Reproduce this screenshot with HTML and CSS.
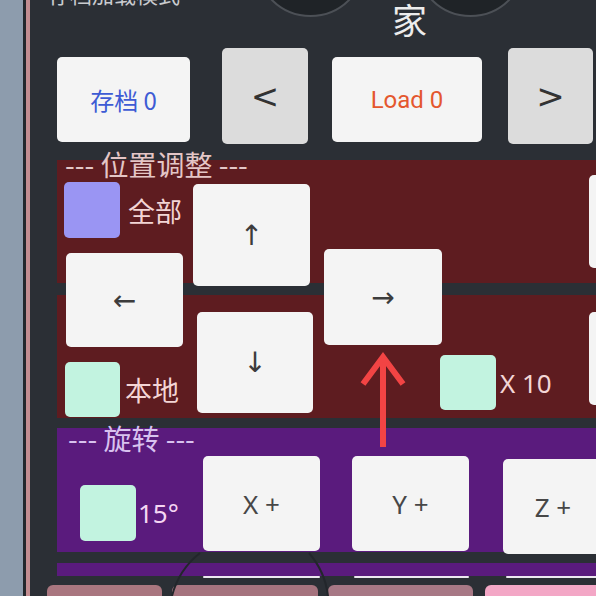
FILE: index.html
```html
<!DOCTYPE html>
<html lang="zh-CN">
<head>
    <meta charset="UTF-8">
    <title>存档加载</title>
    <link rel="stylesheet" href="styles.css">
</head>
<body>
    <div class="screen">
        <div class="rail"></div>

        <div class="main">
            <div class="top">
                <div class="mode-label">存档加载模式</div>
                <div class="knob knob-a"></div>
                <div class="knob knob-b"></div>
                <div class="home">家</div>
            </div>

            <div class="slot-row">
                <div class="btn btn-save">存档 0</div>
                <div class="btn btn-grey btn-prev">&lt;</div>
                <div class="btn btn-load">Load 0</div>
                <div class="btn btn-grey btn-next">&gt;</div>
            </div>

            <div class="panel panel-move">
                <div class="panel-title">--- 位置调整 ---</div>
                <div class="pad">
                    <div class="col col-a">
                        <div class="toggle toggle-all">
                            <span class="box box-violet"></span>
                            <span class="toggle-text">全部</span>
                        </div>
                        <div class="btn key key-left">←</div>
                        <div class="toggle toggle-local">
                            <span class="box box-mint"></span>
                            <span class="toggle-text">本地</span>
                        </div>
                    </div>
                    <div class="col col-b">
                        <div class="btn key key-up">↑</div>
                        <div class="btn key key-down">↓</div>
                    </div>
                    <div class="col col-c">
                        <div class="btn key key-right">→</div>
                    </div>
                    <div class="col col-d">
                        <div class="toggle toggle-x10">
                            <span class="box box-mint"></span>
                            <span class="toggle-text latin">X 10</span>
                        </div>
                    </div>
                    <div class="col col-e">
                        <div class="btn key edge-1"></div>
                        <div class="btn key edge-2"></div>
                    </div>
                </div>
            </div>

            <div class="panel panel-rotate">
                <div class="panel-title">--- 旋转 ---</div>
                <div class="rot-row">
                    <div class="toggle toggle-step">
                        <span class="box box-mint"></span>
                        <span class="toggle-text latin">15°</span>
                    </div>
                    <div class="btn axis axis-x">X +</div>
                    <div class="btn axis axis-y">Y +</div>
                    <div class="btn axis axis-z">Z +</div>
                </div>
            </div>

            <div class="strip"></div>
            <div class="strip-edges">
                <span class="edge e1"></span>
                <span class="edge e2"></span>
                <span class="edge e3"></span>
            </div>

            <div class="tabs">
                <div class="tab t1"></div>
                <div class="tab t2"></div>
                <div class="tab t3"></div>
                <div class="tab t4"></div>
            </div>
        </div>

        <!-- hint arrow and joystick ring drawn over the ui -->
        <svg class="hint" width="596" height="596" viewBox="0 0 596 596">
            <path d="M200 553 A80 80 0 0 0 172 596" fill="none" stroke="#22262b" stroke-width="2"/>
            <path d="M309 553 A80 80 0 0 1 328 596" fill="none" stroke="#22262b" stroke-width="2"/>
            <line x1="383" y1="360" x2="383" y2="447" stroke="#f24444" stroke-width="6"/>
            <polyline points="363,384 383,357 403,384" fill="none" stroke="#f24444" stroke-width="6"/>
        </svg>
    </div>
</body>
</html>
```

FILE: styles.css
```css
html, body {
    margin: 0;
    padding: 0;
}

body {
    width: 596px;
    height: 596px;
    overflow: hidden;
    background: #2b2f35;
    font-family: Roboto, "Noto Sans CJK SC", sans-serif;
}

.screen {
    position: relative;
    display: flex;
    width: 596px;
    height: 596px;
    overflow: hidden;
}

.rail {
    flex: 0 0 30px;
    background: linear-gradient(to right, #8d9cad 0 23px, #23272c 23px 26px, #c38d91 26px 30px);
}

.main {
    flex: 1;
    display: flex;
    flex-direction: column;
    position: relative;
}

/* top bar */
.top {
    position: relative;
    height: 48px;
    flex-shrink: 0;
}

.mode-label {
    position: absolute;
    left: 18px;
    top: -20px;
    font-family: "Noto Sans CJK SC", sans-serif;
    font-size: 22px;
    line-height: 26px;
    color: #c9cbcf;
}

.knob {
    position: absolute;
    top: -94px;
    width: 107px;
    height: 107px;
    border-radius: 50%;
    background: #1f2327;
    border: 2px solid #4c5056;
}

.knob-a { left: 225px; }
.knob-b { left: 385px; }

.home {
    position: absolute;
    left: 362px;
    top: 0;
    z-index: 1;
    font-family: "Noto Sans CJK SC", sans-serif;
    font-size: 35px;
    line-height: 38px;
    color: #ececec;
}

/* buttons */
.btn {
    display: flex;
    align-items: center;
    justify-content: center;
    flex-shrink: 0;
    background: #f4f4f4;
    border-radius: 5px;
    box-sizing: border-box;
    color: #444;
}

.btn-grey {
    background: #dcdcdc;
    height: 96px;
    font-family: "DejaVu Sans", sans-serif;
    font-size: 34px;
    color: #333;
}

.slot-row {
    display: flex;
    align-items: flex-start;
    padding-left: 27px;
    height: 96px;
    flex-shrink: 0;
}

.btn-save {
    width: 133px;
    height: 85px;
    margin-top: 9px;
    font-family: "Noto Sans CJK SC", sans-serif;
    font-size: 24px;
    color: #3d5bd4;
}

.btn-prev {
    width: 86px;
    margin-left: 32px;
}

.btn-load {
    width: 150px;
    height: 85px;
    margin-top: 9px;
    margin-left: 24px;
    font-size: 24px;
    color: #e4572e;
}

.btn-next {
    width: 85px;
    margin-left: 26px;
}

/* panels */
.panel {
    display: flex;
    flex-direction: column;
    flex-shrink: 0;
    margin-left: 27px;
}

.panel-title {
    height: 28px;
    font-family: "Noto Sans CJK SC", sans-serif;
    font-size: 28px;
    line-height: 28px;
    white-space: nowrap;
}

.panel-move {
    margin-top: 16px;
    height: 258px;
    background: linear-gradient(to bottom, #5e1c20 0 123px, #2b2f35 123px 135px, #5e1c20 135px 258px);
}

.panel-move .panel-title {
    margin-top: -10px;
    padding-left: 8px;
    color: #e4c6c6;
}

.pad {
    display: flex;
    align-items: flex-start;
}

.col {
    display: flex;
    flex-direction: column;
    align-items: flex-start;
    flex-shrink: 0;
}

.col-a { width: 119px; margin-left: 7px; }
.col-b { width: 120px; margin-left: 10px; }
.col-c { width: 118px; margin-left: 11px; }
.col-d { width: 149px; margin-left: -2px; }
.col-e { width: 60px; }

.key {
    font-family: "DejaVu Sans", sans-serif;
    font-size: 28px;
    color: #3c3c3c;
}

.key-left { width: 117px; height: 94px; margin: 15px 0 0 2px; }
.key-up { width: 117px; height: 102px; margin-top: 6px; }
.key-down { width: 116px; height: 101px; margin: 26px 0 0 4px; }
.key-right { width: 118px; height: 96px; margin-top: 71px; }
.edge-1 { width: 60px; height: 93px; margin-top: -3px; }
.edge-2 { width: 60px; height: 93px; margin-top: 44px; }

.toggle {
    display: flex;
    align-items: center;
}

.box {
    display: block;
    width: 56px;
    height: 56px;
    border-radius: 5px;
    flex-shrink: 0;
}

.box-violet { background: #9a95f3; }
.box-mint { background: #c2f3e0; }

.toggle-text {
    font-family: "Noto Sans CJK SC", sans-serif;
    font-size: 27px;
    color: #f3d5d5;
    white-space: nowrap;
}

.toggle-text.latin {
    font-family: "Noto Sans", sans-serif;
    font-size: 26px;
}

.toggle-all { margin-top: 4px; }
.toggle-all .toggle-text { margin-left: 8px; }

.toggle-local { margin: 15px 0 0 1px; }
.toggle-local .box { width: 55px; height: 55px; }
.toggle-local .toggle-text { margin-left: 5px; }

.toggle-x10 { margin-top: 177px; }
.toggle-x10 .box { height: 55px; }
.toggle-x10 .toggle-text { margin-left: 4px; }

/* rotation */
.panel-rotate {
    margin-top: 10px;
    height: 124px;
    background: #5a1b7d;
}

.panel-rotate .panel-title {
    margin-top: -4px;
    padding-left: 11px;
    color: #d8c2ef;
}

.rot-row {
    display: flex;
    align-items: flex-start;
}

.toggle-step {
    width: 123px;
    margin: 33px 0 0 23px;
    flex-shrink: 0;
}

.toggle-step .toggle-text {
    margin-left: 2px;
    color: #f5d6f3;
}

.axis {
    width: 117px;
    height: 95px;
    font-family: "Noto Sans", sans-serif;
    font-size: 26px;
    color: #474747;
}

.axis-x { margin-top: 4px; }
.axis-y { margin: 4px 0 0 32px; }
.axis-z { margin: 7px 0 0 34px; width: 100px; }

/* lower strip and tabs */
.strip {
    flex-shrink: 0;
    margin: 11px 0 0 27px;
    height: 13px;
    background: #5a1b7d;
}

.strip-edges {
    display: flex;
    flex-shrink: 0;
    height: 3px;
}

.edge {
    display: block;
    height: 2px;
    background: #ece8f0;
    border-radius: 2px;
}

.e1 { width: 117px; margin-left: 173px; }
.e2 { width: 115px; margin-left: 34px; }
.e3 { width: 100px; margin-left: 37px; }

.tabs {
    display: flex;
    flex-shrink: 0;
    margin-top: 6px;
    padding-left: 17px;
}

.tab {
    height: 30px;
    border-radius: 6px 6px 0 0;
    flex-shrink: 0;
}

.t1 { width: 115px; background: #a9767f; }
.t2 { width: 146px; margin-left: 10px; background: #a5737e; }
.t3 { width: 145px; margin-left: 10px; background: #a77885; }
.t4 { width: 120px; margin-left: 12px; background: #f3a7c6; }

.hint {
    position: absolute;
    left: 0;
    top: 0;
    pointer-events: none;
}
```
